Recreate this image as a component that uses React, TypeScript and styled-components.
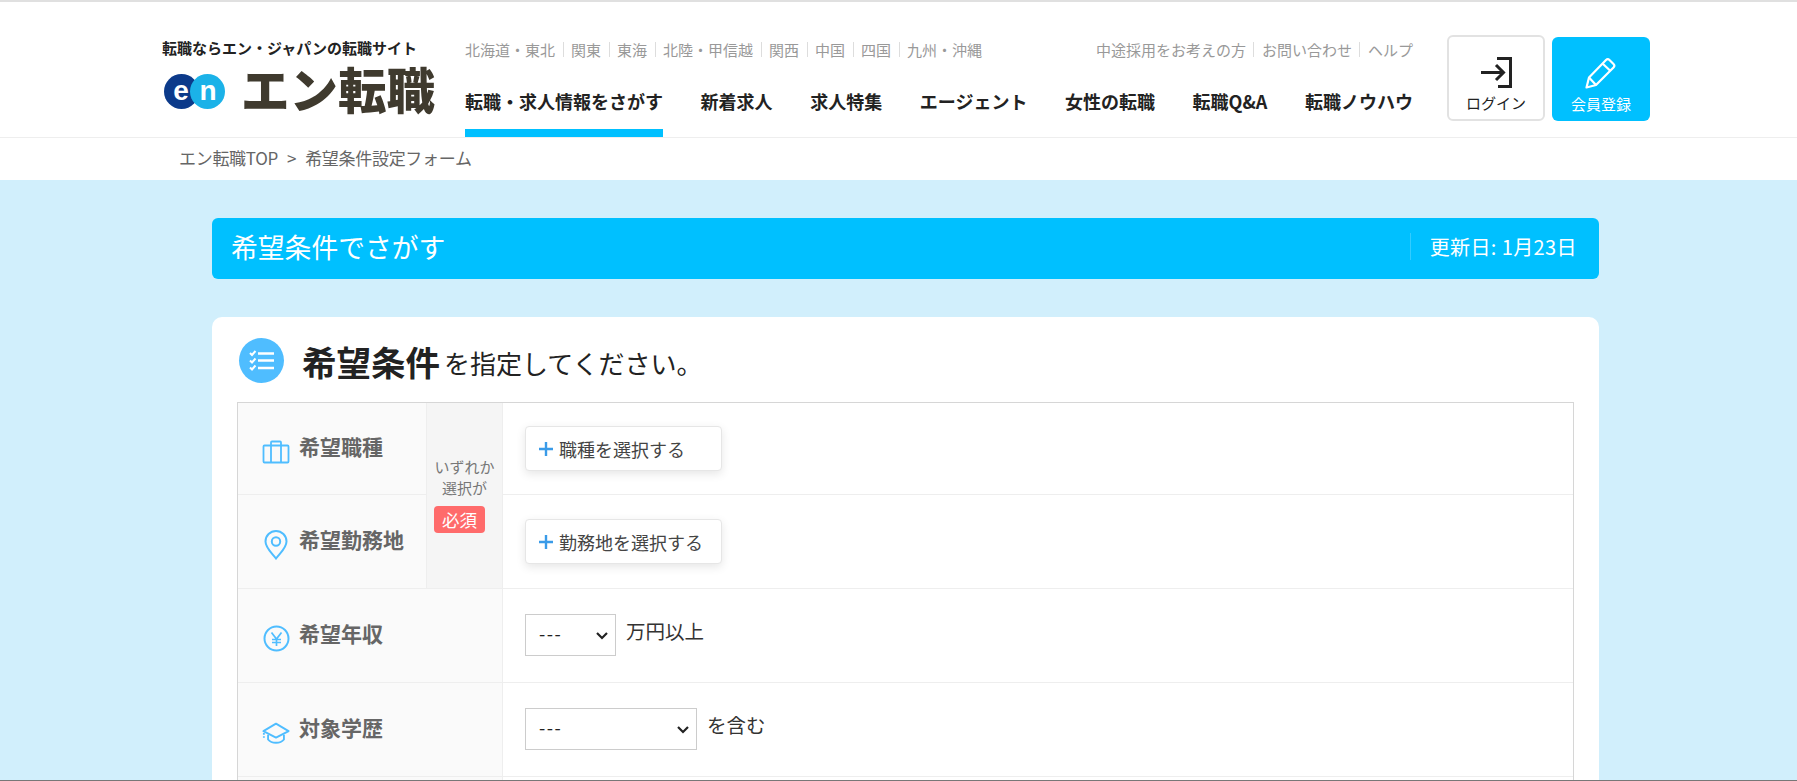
import * as React from 'react';
import styled, { createGlobalStyle } from 'styled-components';

const font = `"Noto Sans CJK JP", "Noto Sans", "Liberation Sans", sans-serif`;
const sky = '#00c0ff';

const GlobalStyle = createGlobalStyle`
  html, body {
    margin: 0;
    padding: 0;
    height: 781px;
    overflow: hidden;
    background: #d1effc;
    font-family: ${font};
  }
  * {
    box-sizing: border-box;
  }
`;

const Page = styled.div`
  height: 781px;
  overflow: hidden;
  border-bottom: 1px solid #777;
`;

const Header = styled.header`
  height: 138px;
  background: #fff;
  border-top: 2px solid #e0e0e0;
  border-bottom: 1px solid #eee;
  display: flex;
  padding-left: 162px;
`;

const Brand = styled.div`
  width: 303px;
  padding-top: 36px;
`;

const Tagline = styled.div`
  font-size: 15px;
  font-weight: 700;
  line-height: 20px;
  color: #222;
  white-space: nowrap;
`;

const LogoRow = styled.div`
  display: flex;
  align-items: center;
  height: 56px;
  margin: 5px 0 0 2px;
`;

const LogoText = styled.div`
  margin: -6px 0 0 16px;
  font-size: 48.5px;
  line-height: 44px;
  font-weight: 900;
  color: #3f3a2e;
  white-space: nowrap;
`;

const Center = styled.div`
  width: 948px;
  display: flex;
  flex-direction: column;
`;

const SubRow = styled.div`
  height: 29px;
  margin-top: 40px;
  display: flex;
  justify-content: space-between;
  font-size: 15px;
  line-height: 15px;
  color: #999;
`;

const SubList = styled.div`
  display: flex;
  height: 15px;
`;

const SubLink = styled.span`
  padding: 0 7.5px;
  white-space: nowrap;
  border-left: 1px solid #ddd;
  &:first-child {
    padding-left: 0;
    border-left: 0;
  }
  &:last-child {
    padding-right: 0;
  }
`;

const Nav = styled.nav`
  display: flex;
  justify-content: space-between;
  flex: 1;
`;

const NavItem = styled.a<{ $active?: boolean }>`
  height: 66px;
  padding-top: 17px;
  font-size: 18px;
  line-height: 26px;
  font-weight: 700;
  color: #222;
  white-space: nowrap;
  border-bottom: 8px solid ${(p) => (p.$active ? sky : 'transparent')};
`;

const Actions = styled.div`
  display: flex;
  gap: 7px;
  margin-left: 34px;
  padding-top: 33px;
`;

const ActionButton = styled.a<{ $primary?: boolean }>`
  width: 98px;
  height: ${(p) => (p.$primary ? 84 : 86)}px;
  margin-top: ${(p) => (p.$primary ? 2 : 0)}px;
  border-radius: 6px;
  border: ${(p) => (p.$primary ? '0' : '2px solid #e2e2e2')};
  background: ${(p) => (p.$primary ? sky : '#fff')};
  color: ${(p) => (p.$primary ? '#fff' : '#222')};
  display: flex;
  flex-direction: column;
  align-items: center;
  justify-content: flex-end;
  padding-bottom: ${(p) => (p.$primary ? 7 : 6)}px;
  font-size: 15px;
  line-height: 20px;
  svg {
    margin-bottom: 5px;
  }
`;

const Breadcrumb = styled.div`
  height: 42px;
  background: #fff;
  padding: 8px 0 0 179px;
  font-size: 17px;
  line-height: 24px;
  letter-spacing: -0.3px;
  color: #666;
  span {
    margin: 0 9px;
  }
`;

const Main = styled.main`
  width: 1387px;
  margin: 38px 0 0 212px;
`;

const TitleBar = styled.div`
  height: 61px;
  background: ${sky};
  border-radius: 6px;
  display: flex;
  align-items: center;
  justify-content: space-between;
  padding: 0 22px 0 19px;
  color: #fff;
`;

const TitleText = styled.h1`
  margin: -3px 0 0;
  font-size: 26.8px;
  line-height: 36px;
  font-weight: 400;
`;

const UpdateDate = styled.div`
  height: 27px;
  margin-top: -4px;
  padding-left: 19px;
  border-left: 1px solid #33ccff;
  font-size: 20px;
  line-height: 27px;
  letter-spacing: 0.4px;
`;

const Card = styled.section`
  margin-top: 38px;
  background: #fff;
  border-radius: 10px 10px 0 0;
  padding: 21px 25px 0;
`;

const CardHead = styled.div`
  display: flex;
  align-items: center;
  height: 45px;
  margin: 0 0 19px 2px;
`;

const HeadIcon = styled.div`
  width: 45px;
  height: 45px;
  border-radius: 50%;
  background: #4fbdff;
  display: flex;
  align-items: center;
  justify-content: center;
  margin-right: 18px;
`;

const HeadStrong = styled.strong`
  font-size: 34.5px;
  line-height: 44px;
  font-weight: 700;
  color: #222;
`;

const HeadRest = styled.span`
  margin-left: 4px;
  padding-top: 5px;
  font-size: 26px;
  line-height: 38px;
  color: #222;
`;

const Table = styled.div`
  border: 1px solid #d6d6d6;
  border-bottom: 0;
`;

const GroupedRows = styled.div`
  display: grid;
  grid-template-columns: 188px 77px 1fr;
  grid-template-rows: 92px 93px;
  border-bottom: 1px solid #eee;
`;

const Row = styled.div<{ $height: number }>`
  display: grid;
  grid-template-columns: 265px 1fr;
  height: ${(p) => p.$height}px;
  border-bottom: 1px solid #eee;
`;

const LabelCell = styled.div<{ $last?: boolean; $divided?: boolean }>`
  background: #fafafa;
  display: flex;
  align-items: center;
  padding-left: 24px;
  gap: 9px;
  border-bottom: ${(p) => (p.$last ? '0' : '1px solid #eee')};
  border-right: ${(p) => (p.$divided ? '1px solid #eee' : '0')};
`;

const LabelIcon = styled.span`
  width: 28px;
  margin-top: 6px;
  display: flex;
  justify-content: center;
  flex: none;
`;

const LabelText = styled.span`
  font-size: 21px;
  font-weight: 700;
  color: #666;
  line-height: 28px;
  margin-top: -5px;
`;

const RequiredCell = styled.div`
  grid-column: 2;
  grid-row: 1 / span 2;
  background: #f5f5f5;
  border-left: 1px solid #eee;
  border-right: 1px solid #eee;
  display: flex;
  flex-direction: column;
  align-items: center;
  padding-top: 53px;
  font-size: 15px;
  line-height: 21px;
  color: #777;
`;

const RequiredBadge = styled.span`
  width: 51px;
  height: 27px;
  margin: 8px 10px 0 0;
  border-radius: 4px;
  background: #ff6b6b;
  color: #fff;
  font-size: 17.5px;
  line-height: 27px;
  text-align: center;
`;

const FieldCell = styled.div<{ $last?: boolean }>`
  display: flex;
  align-items: center;
  padding-left: 22px;
  border-bottom: ${(p) => (p.$last ? '0' : '1px solid #eee')};
`;

const SelectButton = styled.button`
  width: 197px;
  height: 45px;
  border: 1px solid #e6e6e6;
  border-radius: 4px;
  background: #fff;
  box-shadow: 0 3px 10px rgba(0, 0, 0, 0.1);
  display: flex;
  align-items: center;
  padding: 0 0 0 13px;
  font-family: ${font};
  font-size: 18px;
  color: #444;
  white-space: nowrap;
  svg {
    margin-right: 6px;
  }
`;

const SelectCell = styled.div`
  display: flex;
  align-items: flex-start;
  padding: 25px 0 0 22px;
`;

const SelectWrap = styled.div<{ $width: number }>`
  position: relative;
  width: ${(p) => p.$width}px;
  height: 42px;
  svg {
    position: absolute;
    right: 8px;
    top: 18px;
    pointer-events: none;
  }
`;

const NativeSelect = styled.select`
  appearance: none;
  width: 100%;
  height: 100%;
  padding: 0 0 4px 13px;
  border: 1px solid #ccc;
  border-radius: 0;
  background: #fff;
  font-family: ${font};
  font-size: 18px;
  letter-spacing: 1.5px;
  color: #222;
`;

const Unit = styled.span`
  margin: 4px 0 0 10px;
  font-size: 19.5px;
  line-height: 26px;
  color: #333;
`;

const Briefcase = () => (
  <svg width="28" height="24" viewBox="0 0 28 24" fill="none" stroke="#4fbdff" strokeWidth="1.8">
    <rect x="1.5" y="5.5" width="25" height="17" rx="1" />
    <path d="M9 5.5v17M19 5.5v17M9 5.5V2.500a1 1 0 0 1 1-1h8a1 1 0 0 1 1 1v3" />
  </svg>
);

const Pin = () => (
  <svg width="24" height="30" viewBox="0 0 24 30" fill="none" stroke="#4fbdff" strokeWidth="2">
    <path d="M12 28.5C8 23 1.5 18 1.5 11.5a10.5 10.5 0 0 1 21 0C22.5 18 16 23 12 28.5z" />
    <circle cx="12" cy="11.5" r="4.2" />
  </svg>
);

const Yen = () => (
  <svg width="27" height="27" viewBox="0 0 27 27" fill="none" stroke="#4fbdff" strokeWidth="2">
    <circle cx="13.5" cy="13.5" r="12" />
    <path d="M8.5 7.5l5 6.5 5-6.5M13.5 14v7M9 14.5h9M9 17.5h9" strokeWidth="1.7" />
  </svg>
);

const Graduation = () => (
  <svg width="30" height="24" viewBox="0 0 30 24" fill="none" stroke="#4fbdff" strokeWidth="2">
    <path d="M15 2L28.500 10 15 17 1.500 10z" strokeLinejoin="round" />
    <path d="M6.500 14v5c2 2.500 5 3.500 8.500 3.500s6.500-1 8.500-3.500v-5" />
    <path d="M2 12v5" strokeDasharray="2 1.500" />
  </svg>
);

const ChecklistIcon = () => (
  <svg width="25" height="21" viewBox="0 0 25 21" fill="none" stroke="#fff">
    <path d="M9 3.500h16M9 10.500h16M9 18h16" strokeWidth="2.400" />
    <path d="M1 3l2 2 3.500-4M1 10.500l2 2 3.500-4M1 17.500l2 2 3.500-4" strokeWidth="2" />
  </svg>
);

const Plus = () => (
  <svg width="14" height="14" viewBox="0 0 14 14" stroke="#3a9be8" strokeWidth="2.400">
    <path d="M7 0v14M0 7h14" />
  </svg>
);

const Chevron = () => (
  <svg width="12" height="8" viewBox="0 0 12 8" fill="none" stroke="#222" strokeWidth="2.200">
    <path d="M1 1l5 5 5-5" />
  </svg>
);

const LoginIcon = () => (
  <svg width="31" height="31" viewBox="0 0 31 31" fill="none" stroke="#222" strokeWidth="3">
    <path d="M0 15.500h22M15 8l7.500 7.500-7.500 7.500" />
    <path d="M16 1.500h13.500v28H17" />
  </svg>
);

const PencilIcon = () => (
  <svg width="32" height="32" viewBox="0 0 32 32" fill="none" stroke="#fff" strokeWidth="2.200" strokeLinejoin="round">
    <path d="M4 20.500L21 3a2.500 2.500 0 0 1 3.500 0l4 4a2.500 2.500 0 0 1 0 3.500L11 28 1.500 30.500z" />
    <path d="M4 20.500l7 7.500M17.500 6.500l8 7.500" />
  </svg>
);

const EnMark = () => (
  <svg width="61" height="35" viewBox="0 0 61 35">
    <circle cx="17.500" cy="17.500" r="17.500" fill="#0c3a8a" />
    <circle cx="43.500" cy="17.500" r="17.500" fill="#1bb2e8" />
    <text x="17" y="26" textAnchor="middle" fontFamily="Liberation Sans, sans-serif" fontWeight="700" fontSize="28" fill="#fff">e</text>
    <text x="44" y="26" textAnchor="middle" fontFamily="Liberation Sans, sans-serif" fontWeight="700" fontSize="28" fill="#fff">n</text>
  </svg>
);

const regions = ['北海道・東北', '関東', '東海', '北陸・甲信越', '関西', '中国', '四国', '九州・沖縄'];
const helpLinks = ['中途採用をお考えの方', 'お問い合わせ', 'ヘルプ'];
const navItems = ['転職・求人情報をさがす', '新着求人', '求人特集', 'エージェント', '女性の転職', '転職Q&A', '転職ノウハウ'];

const App: React.FC = () => {
  return (
    <Page>
      <GlobalStyle />
      <Header>
        <Brand>
          <Tagline>転職ならエン・ジャパンの転職サイト</Tagline>
          <LogoRow>
            <EnMark />
            <LogoText>エン転職</LogoText>
          </LogoRow>
        </Brand>
        <Center>
          <SubRow>
            <SubList>
              {regions.map((r) => (
                <SubLink key={r}>{r}</SubLink>
              ))}
            </SubList>
            <SubList>
              {helpLinks.map((r) => (
                <SubLink key={r}>{r}</SubLink>
              ))}
            </SubList>
          </SubRow>
          <Nav>
            {navItems.map((n, i) => (
              <NavItem key={n} $active={i === 0}>
                {n}
              </NavItem>
            ))}
          </Nav>
        </Center>
        <Actions>
          <ActionButton>
            <LoginIcon />
            ログイン
          </ActionButton>
          <ActionButton $primary>
            <PencilIcon />
            会員登録
          </ActionButton>
        </Actions>
      </Header>
      <Breadcrumb>
        エン転職TOP<span>&gt;</span>希望条件設定フォーム
      </Breadcrumb>
      <Main>
        <TitleBar>
          <TitleText>希望条件でさがす</TitleText>
          <UpdateDate>更新日: 1月23日</UpdateDate>
        </TitleBar>
        <Card>
          <CardHead>
            <HeadIcon>
              <ChecklistIcon />
            </HeadIcon>
            <HeadStrong>希望条件</HeadStrong>
            <HeadRest>を指定してください。</HeadRest>
          </CardHead>
          <Table>
            <GroupedRows>
              <LabelCell>
                <LabelIcon>
                  <Briefcase />
                </LabelIcon>
                <LabelText>希望職種</LabelText>
              </LabelCell>
              <RequiredCell>
                <span>いずれか</span>
                <span>選択が</span>
                <RequiredBadge>必須</RequiredBadge>
              </RequiredCell>
              <FieldCell>
                <SelectButton>
                  <Plus />
                  職種を選択する
                </SelectButton>
              </FieldCell>
              <LabelCell $last>
                <LabelIcon>
                  <Pin />
                </LabelIcon>
                <LabelText>希望勤務地</LabelText>
              </LabelCell>
              <FieldCell $last>
                <SelectButton>
                  <Plus />
                  勤務地を選択する
                </SelectButton>
              </FieldCell>
            </GroupedRows>
            <Row $height={94}>
              <LabelCell $last $divided>
                <LabelIcon>
                  <Yen />
                </LabelIcon>
                <LabelText>希望年収</LabelText>
              </LabelCell>
              <SelectCell>
                <SelectWrap $width={91}>
                  <NativeSelect>
                    <option>---</option>
                  </NativeSelect>
                  <Chevron />
                </SelectWrap>
                <Unit>万円以上</Unit>
              </SelectCell>
            </Row>
            <Row $height={94}>
              <LabelCell $last $divided>
                <LabelIcon>
                  <Graduation />
                </LabelIcon>
                <LabelText>対象学歴</LabelText>
              </LabelCell>
              <SelectCell>
                <SelectWrap $width={172}>
                  <NativeSelect>
                    <option>---</option>
                  </NativeSelect>
                  <Chevron />
                </SelectWrap>
                <Unit>を含む</Unit>
              </SelectCell>
            </Row>
            <Row $height={40}>
              <LabelCell $last $divided />
              <div />
            </Row>
          </Table>
        </Card>
      </Main>
    </Page>
  );
};

export default App;
